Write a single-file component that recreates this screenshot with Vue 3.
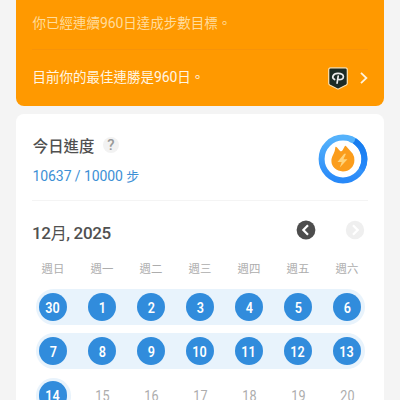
<script setup>
const weekdays = ['週日', '週一', '週二', '週三', '週四', '週五', '週六']
const weeks = [
  { days: [30, 1, 2, 3, 4, 5, 6], done: 7 },
  { days: [7, 8, 9, 10, 11, 12, 13], done: 7 },
  { days: [14, 15, 16, 17, 18, 19, 20], done: 1 },
]
</script>

<template>
  <main class="screen">
    <section class="streak">
      <p class="streak-now">你已經連續<b>960</b>日達成步數目標。</p>
      <div class="streak-best">
        <p>目前你的最佳連勝是<b>960</b>日。</p>
        <svg class="badge" width="20" height="23" viewBox="0 0 20 23">
          <path d="M2.6.8h14.8Q19.3.8 19.3 2.7v13.6q0 1.1-1 1.7L10 22.2 1.7 18q-1-.6-1-1.7V2.7Q.7.8 2.6.8Z" fill="#1c2b25" stroke="#ffe3b0" stroke-width="1.2" />
          <path d="M6.6 12.6C3.2 10.8 4.8 6.6 9.8 6.4c3.5-.1 5.6 1.1 5.6 3.3 0 2.4-2.6 3.4-5.5 2.6M10.2 9.2 9.1 16.2" fill="none" stroke="#ececec" stroke-width="1.7" stroke-linecap="round" stroke-linejoin="round" />
        </svg>
        <svg class="chevron" width="8" height="12" viewBox="0 0 8 12">
          <path d="M1 .8 6.4 6 1 11.2" fill="none" stroke="#fff3dc" stroke-width="1.8" />
        </svg>
      </div>
    </section>

    <section class="card">
      <header class="progress">
        <div>
          <h2>今日進度 <span class="help">?</span></h2>
          <p class="steps">10637 / 10000 <span>步</span></p>
        </div>
        <svg class="ring" width="50" height="50" viewBox="0 0 50 50">
          <defs>
            <linearGradient id="ringBlue" x1="0" y1="0" x2="0" y2="1">
              <stop offset="0" stop-color="#55b2fb" />
              <stop offset="1" stop-color="#2889f8" />
            </linearGradient>
            <linearGradient id="ringHead" x1="0" y1="0" x2="0" y2="1">
              <stop offset="0" stop-color="#157bee" />
              <stop offset="1" stop-color="#2889fa" />
            </linearGradient>
          </defs>
          <circle cx="25" cy="25" r="21.4" fill="none" stroke="url(#ringBlue)" stroke-width="6" />
          <path d="M36.2 6.8A21.4 21.4 0 0 1 43.5 35.7" fill="none" stroke="url(#ringHead)" stroke-width="6" />
          <circle cx="33.8" cy="5.7" r="3" fill="#55b2fb" />
          <path d="M17.4 12.9Q18 12.3 18.8 13.2L21.6 16.4Q23.4 18.2 24.6 16.2L26.6 12.4Q27.4 11.3 28.4 12.5L34.6 19.6Q36.4 22.4 36.4 26.2C36.4 32.8 31.2 37.4 24.9 37.4 18.4 37.4 13.4 33 13.4 27.1 13.4 22.5 16.2 20.2 17 15.6Z" fill="#fb9d1c" />
          <path d="M26.2 19.8 19.5 28h4.2L21.8 33.6l7.7-8.3h-4.1l2.6-5.5Z" fill="#ffd47c" />
        </svg>
      </header>

      <div class="month">
        <h3>12<span>月</span>, 2025</h3>
        <svg class="nav" width="20" height="20" viewBox="0 0 20 20">
          <circle cx="10" cy="10" r="9.4" fill="#4d4d4d" />
          <path d="M12 5.2 7.3 10l4.7 4.8" fill="none" stroke="#fff" stroke-width="2.2" />
        </svg>
        <svg class="nav" width="20" height="20" viewBox="0 0 20 20">
          <circle cx="10" cy="10" r="9.2" fill="#efefef" />
          <path d="M8 5.2l4.7 4.8L8 14.8" fill="none" stroke="#fff" stroke-width="2.2" />
        </svg>
      </div>

      <div class="grid weekdays">
        <span v-for="w in weekdays" :key="w">{{ w }}</span>
      </div>
      <div v-for="(week, i) in weeks" :key="i" class="grid week">
        <div class="band" :style="{ gridColumn: `1 / span ${week.done}` }"></div>
        <div
          v-for="(d, j) in week.days"
          :key="d"
          class="day"
          :class="{ done: j < week.done }"
          :style="{ gridColumn: j + 1 }"
        >
          <span>{{ d }}</span>
        </div>
      </div>
    </section>
  </main>
</template>

<style>
body {
  background: #f4f4f4;
  overflow: hidden;
}
</style>

<style scoped>
.screen {
  box-sizing: border-box;
  width: 400px;
  height: 400px;
  overflow: hidden;
  padding: 0 16px;
  background: #f4f4f4;
  font-family: Roboto, "Noto Sans CJK TC", sans-serif;
}
h2, h3, p { margin: 0; }
.streak {
  box-sizing: border-box;
  height: 106px;
  padding: 0 16px;
  border-radius: 0 0 8px 8px;
  background: #ff9900;
  font-size: 13.5px;
}
.streak b {
  font-size: 14px;
  font-weight: 400;
  letter-spacing: -0.1px;
}
.streak-now {
  box-sizing: border-box;
  height: 50px;
  padding-top: 13px;
  line-height: 20px;
  text-indent: 0.5px;
  border-bottom: 1px solid #f79309;
  color: #ffdc9c;
}
.streak-best {
  display: flex;
  align-items: center;
  height: 56px;
  color: #fff6e4;
}
.streak-best p { flex: 1; padding: 0 0 2px 0.5px; line-height: 20px; }
.badge { margin-right: 12.5px; }
.card {
  margin-top: 8px;
  height: 300px;
  padding: 0 16px;
  border-radius: 8px 8px 0 0;
  background: #fff;
}
.progress {
  box-sizing: border-box;
  display: flex;
  justify-content: space-between;
  height: 87px;
  padding-top: 19.5px;
  border-bottom: 1px solid #f4f4f4;
}
.progress h2 {
  display: flex;
  align-items: center;
  gap: 8.5px;
  height: 22px;
  padding-left: 0.8px;
  font-size: 15.4px;
  font-weight: 500;
  color: #505050;
}
.help {
  width: 16px;
  height: 16px;
  border-radius: 50%;
  background: #f2f2f2;
  color: #999;
  font-size: 15px;
  line-height: 17px;
  text-align: center;
}
.steps {
  margin-top: 9px;
  padding-left: 0.5px;
  font-size: 14px;
  letter-spacing: -0.08px;
  line-height: 22px;
  color: #3d90d5;
}
.steps span { font-size: 13px; }
.month {
  display: flex;
  align-items: center;
  height: 58px;
}
.month h3 {
  flex: 1;
  padding-top: 7px;
  font-size: 17px;
  letter-spacing: -0.35px;
  line-height: 24px;
  font-weight: 500;
  color: #505050;
}
.month h3 span { font-size: 16px; font-weight: 400; }
.nav + .nav { margin-left: 29px; }
.nav:last-child { margin-right: 3px; }
.grid {
  display: grid;
  grid-template-columns: repeat(7, 49px);
  margin-left: -3.5px;
}
.weekdays {
  height: 30px;
  font-size: 11.4px;
  line-height: 20px;
  text-align: center;
  color: #adadad;
}
.week {
  height: 36px;
  margin-bottom: 8.3px;
}
.band {
  grid-row: 1;
  margin: 0 7px;
  border-radius: 18px;
  background: #e8f3fc;
}
.day {
  grid-row: 1;
  place-self: center;
  width: 28.4px;
  height: 28.4px;
  border-radius: 50%;
  color: #adadad;
  font-size: 15px;
  line-height: 31px;
  text-align: center;
}
.day span { display: inline-block; transform: scaleX(0.84); }
.day.done {
  background: #318cdc;
  color: #fff;
  font-weight: 600;
}
</style>
